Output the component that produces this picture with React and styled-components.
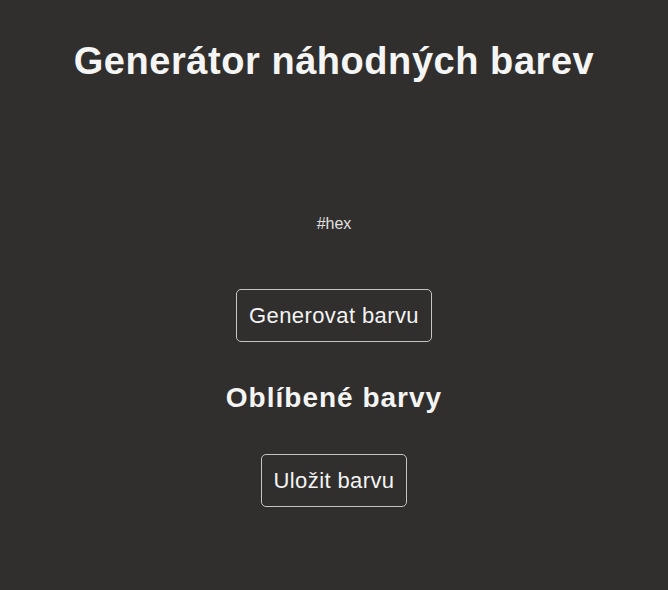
import React from "react";
import styled, { createGlobalStyle } from "styled-components";

const Global = createGlobalStyle`
  html, body { margin: 0; padding: 0; background: #302f2d; }
  body { font-family: "Liberation Sans", Arial, sans-serif; color: #f4f4f4; }
`;

const Page = styled.main`
  min-height: 590px;
  display: flex;
  flex-direction: column;
  align-items: center;
  padding-top: 40px;
  box-sizing: border-box;
`;

const Title = styled.h1`
  margin: 0;
  font-size: 38px;
  font-weight: 700;
  letter-spacing: 0.55px;
  color: #f5f5f5;
`;

const Swatch = styled.div`
  width: 200px;
  height: 132px;
`;

const Hex = styled.p`
  margin: 0;
  font-size: 16px;
  color: #e0e0e0;
`;

const Button = styled.button`
  font-family: "Liberation Sans", Arial, sans-serif;
  font-size: 22px;
  letter-spacing: 0.4px;
  color: #f4f4f4;
  background: transparent;
  border: 1px solid #c4c4c4;
  border-radius: 5px;
  padding: 0 12px;
  height: 53px;
  margin-top: ${(p) => p.$mt}px;
  cursor: pointer;
`;

const Subtitle = styled.h2`
  margin: 40px 0 0;
  font-size: 28px;
  font-weight: 700;
  letter-spacing: 1px;
  color: #f5f5f5;
`;

export default function App() {
  return (
    <>
      <Global />
      <Page>
        <Title>Generátor náhodných barev</Title>
        <Swatch />
        <Hex>#hex</Hex>
        <Button $mt={56}>Generovat barvu</Button>
        <Subtitle>Oblíbené barvy</Subtitle>
        <Button $mt={40}>Uložit barvu</Button>
      </Page>
    </>
  );
}
